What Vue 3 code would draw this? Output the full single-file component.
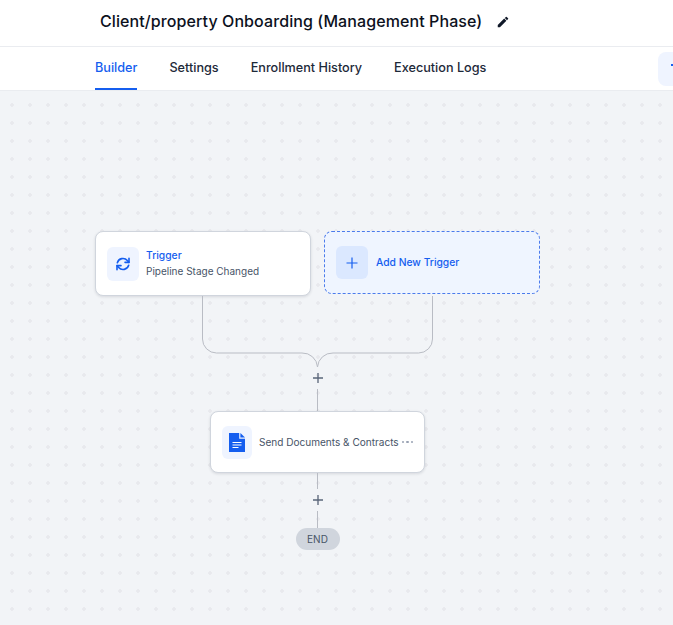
<template>
  <div class="page">
    <header class="title-bar">
      <h1 class="title">Client/property Onboarding (Management Phase)</h1>
      <svg class="edit-icon" viewBox="0 0 24 24" width="14" height="14">
        <path d="M3 17.25V21h3.75L17.81 9.94l-3.75-3.75L3 17.25zM20.71 7.04a1 1 0 0 0 0-1.41l-2.34-2.34a1 1 0 0 0-1.41 0l-1.83 1.83 3.75 3.75 1.83-1.83z" fill="#101828" />
      </svg>
    </header>

    <nav class="tabs">
      <a v-for="tab in tabs" :key="tab" class="tab" :class="{ active: tab === 'Builder' }">{{ tab }}</a>
      <div class="test-btn"><span class="test-mark"></span></div>
    </nav>

    <main class="canvas">
      <div class="flow">
        <div class="triggers">
          <div class="card trigger-card">
            <div class="icon-box">
              <svg viewBox="0 0 24 24" width="16" height="16" fill="none" stroke="#155eef" stroke-width="2.4" stroke-linecap="round" stroke-linejoin="round">
                <path d="M3.5 10a8.7 8.7 0 0 1 15-3.2L21 9.5" />
                <path d="M21 3.5v6h-6" />
                <path d="M20.5 14a8.7 8.7 0 0 1-15 3.2L3 14.5" />
                <path d="M3 20.5v-6h6" />
              </svg>
            </div>
            <div class="trigger-text">
              <div class="trigger-label">Trigger</div>
              <div class="trigger-name">Pipeline Stage Changed</div>
            </div>
          </div>

          <div class="add-card">
            <div class="add-box">
              <svg viewBox="0 0 12 12" width="12" height="12" fill="none" stroke="#155eef" stroke-width="1.2">
                <path d="M6 .5v11M.5 6h11" />
              </svg>
            </div>
            <span class="add-label">Add New Trigger</span>
          </div>
        </div>

        <svg class="merge" width="232" height="71" viewBox="0 0 232 71" fill="none" stroke="#b9bcc4" stroke-width="1">
          <path d="M.5 0v43a14 14 0 0 0 14 14H100a15 15 0 0 1 15.5 14" />
          <path d="M230.5 0v43a14 14 0 0 1-14 14H131a15 15 0 0 0-15.5 14" />
        </svg>

        <div class="add-step">
          <svg viewBox="0 0 10 10" width="10" height="10" fill="none" stroke="#596579" stroke-width="1.3">
            <path d="M5 0v10M0 5h10" />
          </svg>
        </div>
        <div class="line line-top"></div>

        <div class="card action-card">
          <div class="icon-box doc-box">
            <svg viewBox="0 0 16 19" width="16" height="19">
              <path d="M0 0h10.2v5.8H16V19H0z" fill="#155eef" />
              <path d="M11.4 0L16 4.6h-4.6z" fill="#155eef" />
              <path d="M3.5 9.5h9M3.5 12h9M3.5 14.5h6" stroke="#fff" stroke-width="1.2" />
            </svg>
          </div>
          <span class="action-name">Send Documents &amp; Contracts</span>
          <span class="more"><i></i><i></i><i></i></span>
        </div>

        <div class="line line-mid"></div>
        <div class="add-step">
          <svg viewBox="0 0 10 10" width="10" height="10" fill="none" stroke="#596579" stroke-width="1.3">
            <path d="M5 0v10M0 5h10" />
          </svg>
        </div>
        <div class="line line-end"></div>
        <div class="end-pill">END</div>
      </div>
    </main>
  </div>
</template>

<script setup>
const tabs = ['Builder', 'Settings', 'Enrollment History', 'Execution Logs']
</script>

<style>
html, body {
  margin: 0;
  height: 100%;
  overflow: hidden;
}
</style>

<style scoped>
.page {
  width: 673px;
  height: 625px;
  display: flex;
  flex-direction: column;
  overflow: hidden;
  font-family: Inter, "Liberation Sans", sans-serif;
  background: #fff;
}

.title-bar {
  height: 42px;
  flex-shrink: 0;
  display: flex;
  align-items: center;
  gap: 15px;
  padding: 0 0 4px 100px;
  border-bottom: 1px solid #eaecf0;
}

.title {
  margin: 0;
  font-size: 16px;
  font-weight: 500;
  letter-spacing: 0.09px;
  line-height: 24px;
  color: #0c111d;
  white-space: nowrap;
}

.edit-icon {
  flex-shrink: 0;
  margin: 2px 0 0 -1px;
}

.tabs {
  height: 43px;
  flex-shrink: 0;
  display: flex;
  align-items: stretch;
  gap: 32px;
  padding-left: 95px;
  border-bottom: 1px solid #eaecf0;
  position: relative;
}

.tab {
  display: flex;
  align-items: center;
  box-sizing: border-box;
  font-size: 12.65px;
  font-weight: 500;
  color: #1d2939;
  border-bottom: 2px solid transparent;
  white-space: nowrap;
}

.tab.active {
  color: #155eef;
  border-bottom-color: #155eef;
}

.test-btn {
  position: absolute;
  left: 658px;
  top: 5px;
  width: 40px;
  height: 34px;
  border-radius: 8px;
  background: #eff4ff;
}

.test-mark {
  display: block;
  width: 3px;
  height: 2px;
  margin: 12px 0 0 13px;
  background: #155eef;
}

.canvas {
  flex: 1;
  padding: 140px 0 0 95px;
  background-color: #f2f4f7;
  background-image: radial-gradient(circle, #e8e9ed 1.5px, transparent 2px);
  background-size: 18px 18px;
  background-position: 3px 5px;
}

.flow {
  width: 445px;
  display: flex;
  flex-direction: column;
  align-items: center;
}

.triggers {
  display: flex;
  align-items: flex-start;
  gap: 13px;
  width: 100%;
  height: 65px;
}

.card {
  box-sizing: border-box;
  display: flex;
  align-items: center;
  background: #fff;
  border: 1px solid #d0d5dd;
  border-radius: 8px;
  box-shadow: 0 1px 3px rgba(16, 24, 40, 0.12);
}

.trigger-card {
  width: 216px;
  height: 65px;
  padding: 0 11px;
  gap: 7px;
}

.icon-box {
  width: 32px;
  height: 34px;
  flex-shrink: 0;
  display: flex;
  align-items: center;
  justify-content: center;
  border-radius: 6px;
  background: #eff4ff;
}

.trigger-text {
  display: flex;
  flex-direction: column;
  gap: 3px;
  font-size: 10px;
  line-height: 13px;
  white-space: nowrap;
}

.trigger-label {
  font-size: 10.3px;
  font-weight: 500;
  color: #155eef;
}

.trigger-name {
  color: #475467;
}

.add-card {
  box-sizing: border-box;
  width: 216px;
  height: 63px;
  display: flex;
  align-items: center;
  gap: 8px;
  padding: 0 11px;
  background: #eff5ff;
  border: 1px dashed #4b7bec;
  border-radius: 8px;
}

.add-box {
  width: 32px;
  height: 33px;
  display: flex;
  align-items: center;
  justify-content: center;
  border-radius: 6px;
  background: #dbe8ff;
}

.add-label {
  margin-bottom: 2px;
  font-size: 10.3px;
  font-weight: 500;
  color: #155eef;
  white-space: nowrap;
}

.merge {
  display: block;
  flex-shrink: 0;
}

.add-step {
  width: 22px;
  height: 22px;
  display: flex;
  align-items: center;
  justify-content: center;
}

.line {
  width: 1px;
  background: #b9bcc4;
}

.line-top {
  height: 22px;
}

.line-mid {
  height: 16px;
}

.line-end {
  height: 17px;
}

.action-card {
  width: 215px;
  height: 62px;
  padding: 0 11px;
  gap: 7px;
}

.doc-box {
  width: 30px;
  height: 33px;
}

.action-name {
  font-size: 10.05px;
  color: #475467;
  white-space: nowrap;
}

.more {
  display: flex;
  gap: 2px;
  margin-left: -4px;
}

.more i {
  width: 2.5px;
  height: 2.5px;
  border-radius: 50%;
  background: #98a2b3;
}

.end-pill {
  width: 44px;
  height: 22px;
  display: flex;
  align-items: center;
  justify-content: center;
  border-radius: 11px;
  background: #d0d5dd;
  font-size: 10px;
  color: #475467;
}
</style>
